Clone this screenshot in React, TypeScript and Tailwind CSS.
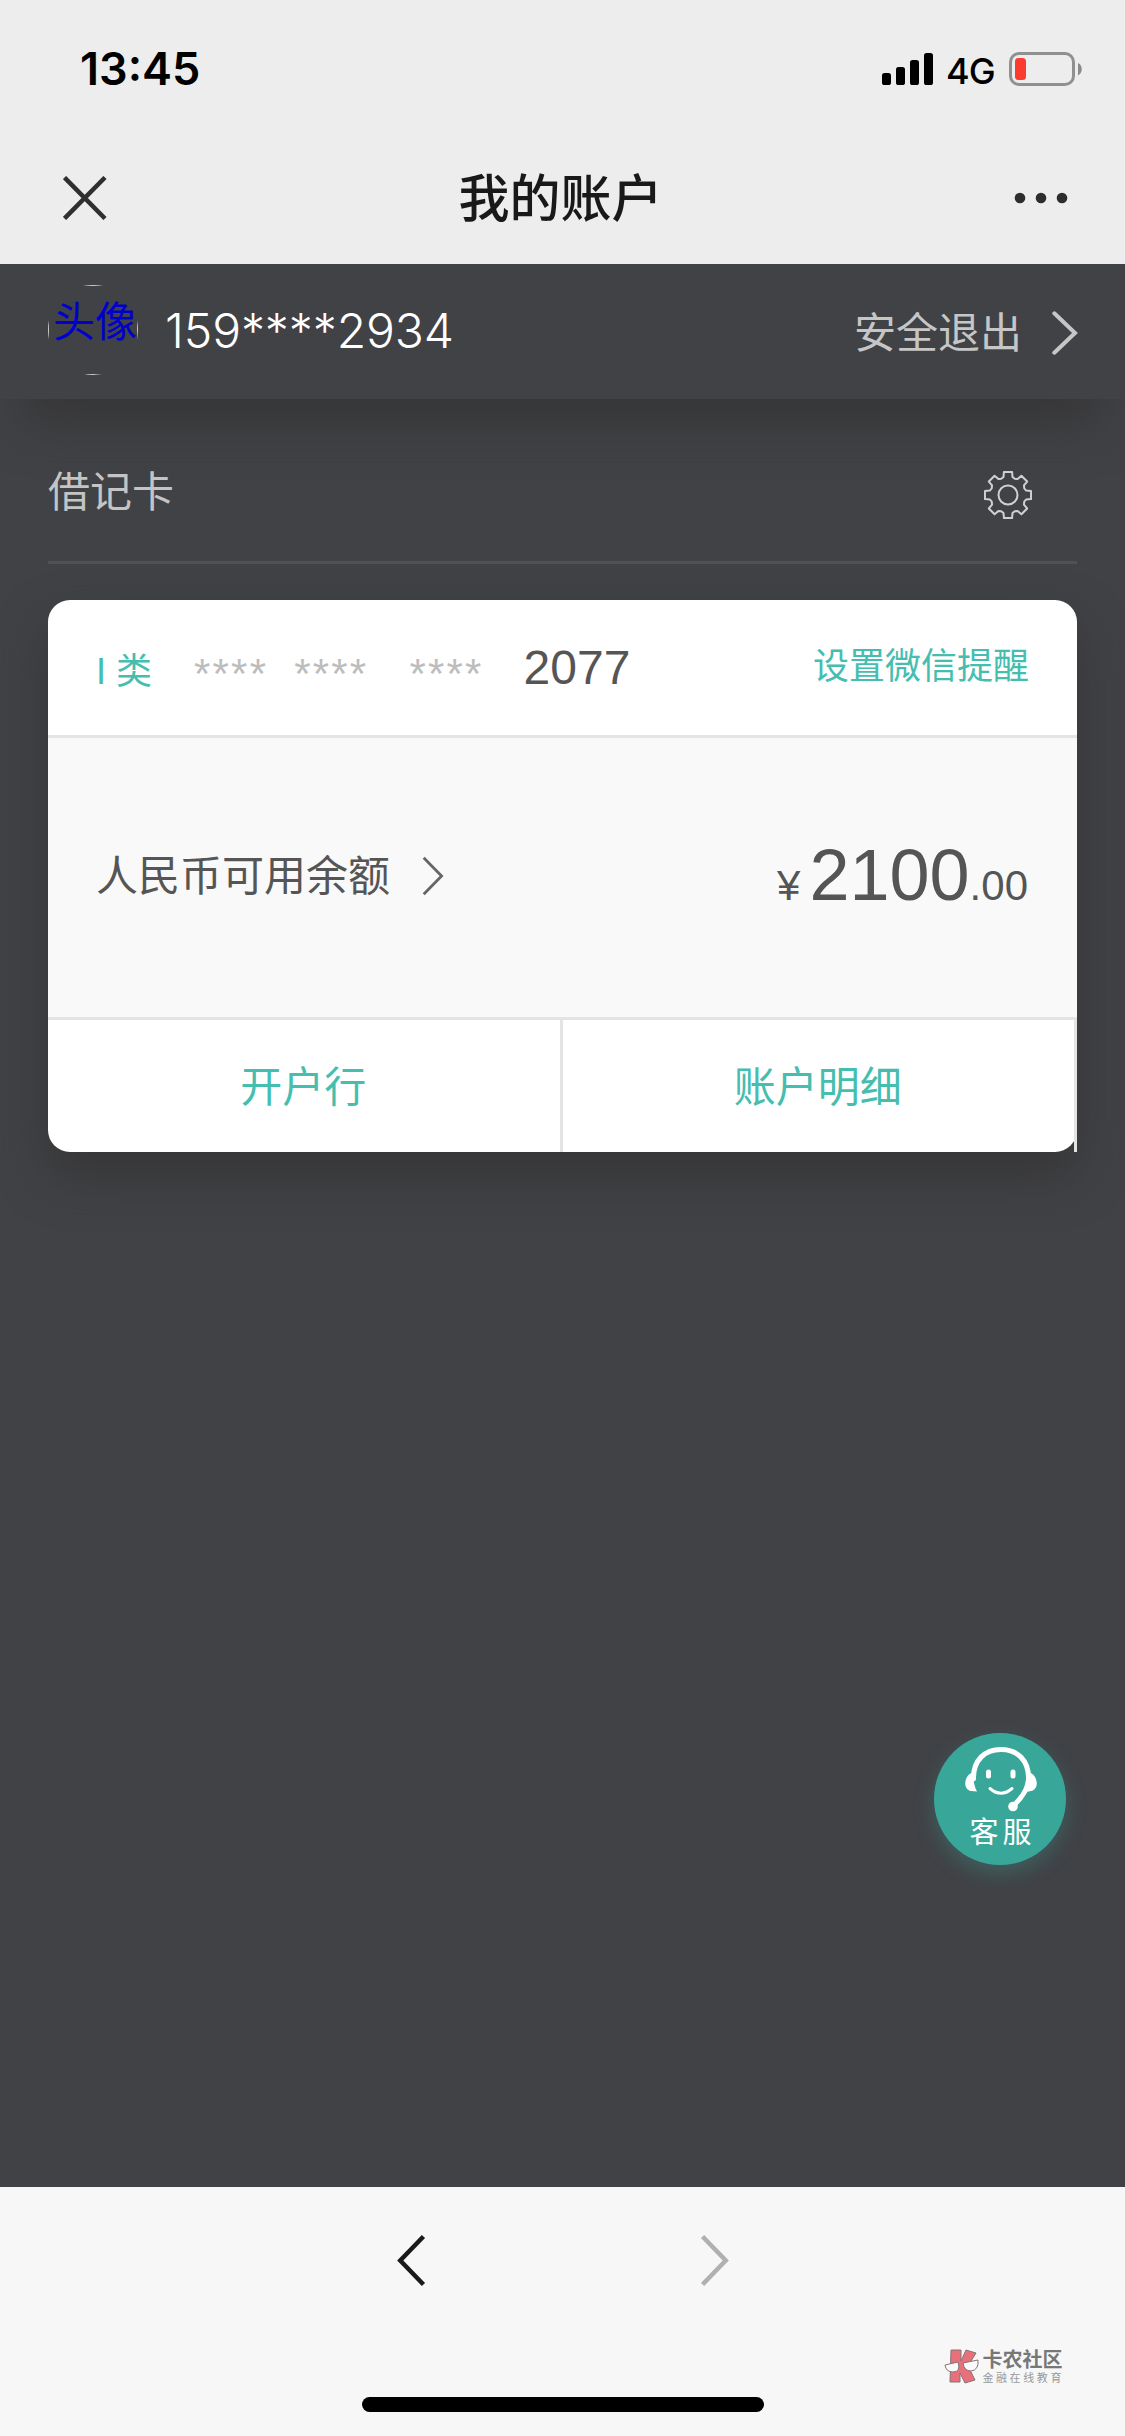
interface ChevronProps { className?: string; stroke: string; width: number; w: number; h: number; left?: boolean; cap?: 'butt' | 'round' }

const TEXT = "font-['Liberation_Sans','Noto_Sans_CJK_SC',sans-serif]"

const STARS = ['ml-[42px]', 'ml-[26px]', 'ml-[41px]']

const ACTIONS = ['开户行', '账户明细']

const BARS = [
  { x: 0, h: 12 },
  { x: 14, h: 18 },
  { x: 28, h: 25 },
  { x: 42, h: 32 },
]

// teeth of the settings gear, one every 45 degrees
function gearPath() {
  const pts: string[] = []
  const at = (r: number, deg: number) => {
    const a = (deg * Math.PI) / 180
    pts.push(`${(24 + r * Math.cos(a)).toFixed(2)} ${(24 + r * Math.sin(a)).toFixed(2)}`)
  }
  for (let i = 0; i < 8; i++) {
    const c = i * 45
    at(17.6, c - 22.5)
    at(18.6, c - 14)
    at(23.4, c - 10)
    at(23.4, c + 10)
    at(18.6, c + 14)
  }
  return `M${pts.join('L')}Z`
}

export default function App() {
  return (
    <div className={`flex h-[2436px] w-[1125px] flex-col overflow-hidden bg-[#414246] ${TEXT}`}>
      <header className="h-[264px] shrink-0 bg-[#ededed]">
        <StatusBar />
        <TitleBar />
      </header>
      <main className="flex flex-1 flex-col">
        <UserBar />
        <DebitHeader />
        <AccountCard />
        <ServiceButton />
      </main>
      <BottomBar />
    </div>
  )
}

function StatusBar() {
  return (
    <div className="flex h-[132px] items-start justify-between pt-[52px] pr-[42px] pl-[80px] text-black">
      <span className="mt-[-6px] font-['Inter',sans-serif] text-[45px] leading-[46px] font-semibold">13:45</span>
      <div className="flex items-start">
        <svg className="mt-[1px]" width="51" height="32" viewBox="0 0 51 32">
          {BARS.map(b => <rect key={b.x} x={b.x} y={32 - b.h} width="9" height={b.h} rx="2.6" />)}
        </svg>
        <span className="mt-px ml-[13px] w-[52px] font-['Inter',sans-serif] text-[36px] leading-[36px] font-[450] tracking-[-0.8px]">4G</span>
        <svg className="ml-[11px]" width="74" height="34" viewBox="0 0 74 34">
          <rect x="1.5" y="1.5" width="63" height="31" rx="8.5" fill="none" stroke="#909090" strokeWidth="3" />
          <rect x="6" y="6" width="11" height="22" rx="3.5" fill="#fc3b30" />
          <path d="M69 11c5 2.4 5 10 0 12.400z" fill="#8a8a8a" />
        </svg>
      </div>
    </div>
  )
}

function TitleBar() {
  return (
    <div className="flex h-[132px] items-center justify-between px-[63px]">
      <svg width="44" height="44" viewBox="0 0 44 44" fill="none" stroke="#2f2f2f" strokeWidth="4.5">
        <path d="M1.5 1.500L42 42.500M42 1.500L1.500 42.500" />
      </svg>
      <h1 className="mt-[3px] text-[51px] leading-[60px] font-medium text-[#191919]">我的账户</h1>
      <svg className="mr-[-6px]" width="54" height="12" viewBox="0 0 54 12" fill="#2d2d2d">
        <circle cx="6" cy="6" r="5.3" />
        <circle cx="27" cy="6" r="5.3" />
        <circle cx="48" cy="6" r="5.3" />
      </svg>
    </div>
  )
}

function UserBar() {
  return (
    <div className="flex h-[135px] shrink-0 items-center bg-[#414246] pr-[47px] pl-[48px] shadow-[0_48px_48px_-24px_rgba(51,51,51,0.8)]">
      <div className="mb-[4px] size-[90px] overflow-hidden rounded-full">
        <div className="flex size-full justify-center border border-[#c8c8c8] pt-[7px] pl-[4px] text-[42px] leading-[60px] whitespace-nowrap text-[#0000cd]">头像</div>
      </div>
      <span className="mt-[-2px] ml-[27px] font-['Inter',sans-serif] text-[48px] leading-[60px] font-[350] tracking-[-0.1px] text-white">159****2934</span>
      <span className="mt-[4px] ml-auto text-[42px] leading-[60px] text-[#c6c6c6]">安全退出</span>
      <Chevron className="mt-[2px] ml-[30px]" w={26} h={44} stroke="#c6c6c6" width={4} cap="round" />
    </div>
  )
}

function DebitHeader() {
  return (
    <div className="mx-[48px] flex h-[165px] w-[1029px] shrink-0 items-center justify-between border-b-3 border-[#505154] pr-[45px]">
      <span className="mt-[26px] text-[42px] leading-[60px] text-[#c4c4c4]">借记卡</span>
      <svg className="mt-[29px]" width="48" height="48" viewBox="0 0 48 48" fill="none" stroke="#d0d0d0" strokeWidth="2" strokeLinejoin="round">
        <path d={gearPath()} />
        <circle cx="24" cy="24" r="9.5" />
      </svg>
    </div>
  )
}

function AccountCard() {
  return (
    <section className="mx-[48px] mt-[36px] w-[1029px] shrink-0 rounded-[22px] bg-white shadow-[0_24px_48px_rgba(51,51,51,0.8)]">
      <div className="flex h-[138px] items-center border-b-3 border-[#e4e4e4] px-[48px]">
        <span className="mt-[9px] text-[36px] leading-[50px] text-[#45beb0]">I 类</span>
        {STARS.map(m => <span key={m} className={`${m} mt-[12px] text-[42px] leading-[50px] tracking-[2.2px] text-[#bdbdbd]`}>****</span>)}
        <span className="ml-[40px] text-[48px] leading-[60px] text-[#555]">2077</span>
        <span className="mt-[-2px] ml-auto text-[36px] leading-[50px] text-[#45beb0]">设置微信提醒</span>
      </div>
      <div className="flex h-[282px] items-center justify-between border-b-3 border-[#e4e4e4] bg-[#f9f9f9] px-[48px] text-[#555]">
        <div className="flex items-center">
          <span className="mt-[-2px] text-[42px] leading-[60px]">人民币可用余额</span>
          <Chevron className="mt-[-4px] ml-[32px]" w={22} h={40} stroke="#666" width={2.8} />
        </div>
        <div className="mt-[5px] mr-px flex items-baseline text-[42px] leading-[80px]">
          <span className="mr-[9px]">¥</span>
          <span className="text-[72px]">2100</span>
          <span>.00</span>
        </div>
      </div>
      <div className="flex h-[132px] rounded-b-[22px]">
        {ACTIONS.map(a => (
          <button key={a} className="flex flex-1 items-center justify-center border-r-3 border-[#e4e4e4] pt-[3px] pr-px text-[42px] leading-[60px] text-[#45beb0]">{a}</button>
        ))}
      </div>
    </section>
  )
}

function ServiceButton() {
  return (
    <button className="mt-auto mr-[59px] mb-[322px] flex size-[132px] shrink-0 flex-col items-center self-end rounded-full bg-[#38a79a] pt-[13px] shadow-[0_8px_20px_rgba(56,167,154,0.3)]">
      <svg className="ml-px" width="74" height="66" viewBox="0 0 74 66" fill="none" stroke="#fff" strokeLinecap="round">
        <path d="M9.5 33C9 14 21 3.500 37 3.500S65 14 64.500 33C64 43 59 51 49 60" strokeWidth="5" />
        <path d="M9 26C-1 30-1 44 7 45L13 45.500C10 40 9 33 9 26Z" fill="#fff" stroke="none" />
        <path d="M65 26C75 30 75 44 67 45L62 46C64.500 40 65.500 33 65 26Z" fill="#fff" stroke="none" />
        <path d="M24.5 26v4M49 26v4" strokeWidth="5" />
        <path d="M26 42.500q11 9.500 22 0" strokeWidth="3" />
        <circle cx="49" cy="60.5" r="4.8" fill="#fff" stroke="none" />
      </svg>
      <span className="mt-[3px] ml-[5px] text-[29px] leading-[36px] tracking-[4px] text-white">客服</span>
    </button>
  )
}

function BottomBar() {
  return (
    <footer className="relative h-[249px] shrink-0 bg-[#f7f7f7]">
      <div className="flex justify-center gap-[274px] pt-[47px]">
        <Chevron w={29} h={53} stroke="#1a1a1a" width={4.5} left />
        <Chevron w={29} h={53} stroke="#b0b0b0" width={4.5} />
      </div>
      <div className="mx-auto mt-[110px] h-[15px] w-[402px] rounded-full bg-black" />
      <Watermark />
    </footer>
  )
}

function Watermark() {
  return (
    <div className="absolute top-[161px] right-[61px] flex items-center">
      <svg width="36" height="38" viewBox="0 0 36 38" stroke="#857378" strokeWidth="1">
        <path d="M7 2H17V13L22 2L32 5L24 18L31 32L21 35L16 25V34H6Z" fill="#e8707a" />
        <path d="M1 17L14 14Q17 24 9 24Q2 24 1 17Z" fill="#fafafa" />
        <path d="M19 15L34 12Q35 22 27 23Q20 23 19 15Z" fill="#fafafa" />
      </svg>
      <div className="ml-[2px] flex flex-col">
        <span className="text-[20px] leading-[21px] font-bold text-[#777]">卡农社区</span>
        <span className="text-[11px] leading-[14px] tracking-[2.6px] text-[#999]">金融在线教育</span>
      </div>
    </div>
  )
}

function Chevron({ className, stroke, width, w, h, left, cap = 'butt' }: ChevronProps) {
  const p = width / 2 + 0.3
  const d = left ? `M${w - p} ${p}L${p + 0.7} ${h / 2}L${w - p} ${h - p}` : `M${p} ${p}L${w - p - 0.7} ${h / 2}L${p} ${h - p}`
  return (
    <svg className={className} width={w} height={h} viewBox={`0 0 ${w} ${h}`} fill="none" stroke={stroke} strokeWidth={width} strokeLinecap={cap}>
      <path d={d} />
    </svg>
  )
}
